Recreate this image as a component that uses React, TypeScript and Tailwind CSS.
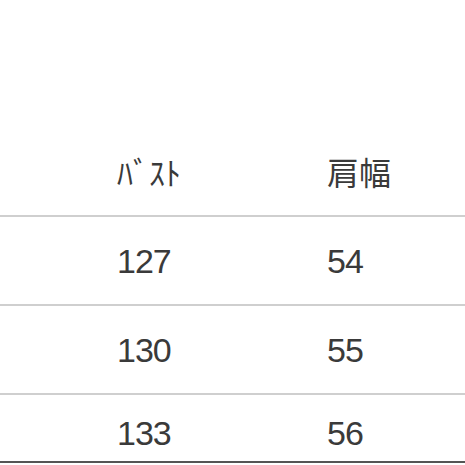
import React from 'react';

const rows = [
  { bust: '127', shoulder: '54' },
  { bust: '130', shoulder: '55' },
  { bust: '133', shoulder: '56' },
];

export default function App() {
  return (
    <div className="h-[465px] w-[465px] overflow-hidden bg-white text-[#3a3a3a]">
      <div className="flex h-[215px] items-end pb-[28px] pl-[117px] font-['Noto_Sans_CJK_JP',sans-serif] text-[32px] leading-[32px]">
        <span className="w-[210px]">ﾊﾞｽﾄ</span>
        <span>肩幅</span>
      </div>
      {rows.map((r, i) => (
        <div
          key={r.bust}
          className={`flex items-center border-t-2 border-[#cfcfcf] pl-[117px] font-['Liberation_Sans',sans-serif] text-[34px] leading-[34px] tracking-[-1px] ${
            i === 2 ? 'h-[70px] border-b-2 border-b-[#555] pt-[10px]' : 'h-[89px]'
          }`}
        >
          <span className="w-[210px]">{r.bust}</span>
          <span>{r.shoulder}</span>
        </div>
      ))}
    </div>
  );
}
